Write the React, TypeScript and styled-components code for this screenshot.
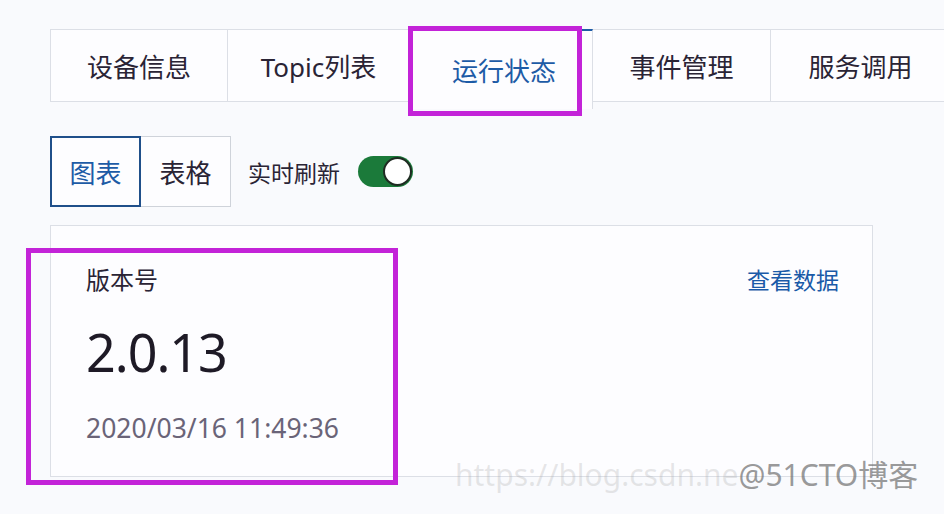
import React, { useState } from 'react';
import styled, { createGlobalStyle } from 'styled-components';

const GlobalStyle = createGlobalStyle`
  html, body {
    margin: 0;
    padding: 0;
    background: #f9fafd;
  }
  body {
    font-family: "Noto Sans", "Noto Sans CJK SC", sans-serif;
    color: #2a2435;
  }
`;

const Page = styled.div`
  position: relative;
  width: 944px;
  height: 514px;
  overflow: hidden;
  padding: 29px 0 0 50px;
  box-sizing: border-box;
`;

const TabBar = styled.div`
  display: flex;
  height: 73px;
`;

const Tab = styled.div<{ $active?: boolean; $width: number }>`
  flex: 0 0 ${(p) => p.$width}px;
  display: flex;
  align-items: center;
  justify-content: center;
  box-sizing: border-box;
  font-size: 26px;
  background: #fdfdff;
  color: ${(p) => (p.$active ? '#1d5ba6' : '#2a2435')};
  border: 1px solid #dcdfe6;
  border-left: none;
  border-top: ${(p) => (p.$active ? '2px solid #1d5ba6' : '1px solid #dcdfe6')};
  border-bottom: ${(p) => (p.$active ? 'none' : '1px solid #dcdfe6')};
  height: ${(p) => (p.$active ? '80px' : '73px')};
  padding-left: ${(p) => (p.$active ? '6px' : '0')};
  &:first-child {
    border-left: 1px solid #dcdfe6;
  }
`;

const Controls = styled.div`
  display: flex;
  align-items: center;
  margin-top: 34px;
  height: 71px;
`;

const Segment = styled.button<{ $active?: boolean; $width: number }>`
  width: ${(p) => p.$width}px;
  height: 71px;
  box-sizing: border-box;
  font-family: inherit;
  font-size: 26px;
  background: #fdfdff;
  color: ${(p) => (p.$active ? '#1d5ba6' : '#2a2435')};
  border: 1px solid ${(p) => (p.$active ? '#1f4f8a' : '#cfd3da')};
  border-width: ${(p) => (p.$active ? '2px' : '1px 1px 1px 0')};
  padding: 0;
  cursor: pointer;
`;

const AutoLabel = styled.span`
  margin-left: 17px;
  font-size: 23px;
  color: #2a2435;
`;

const Switch = styled.button<{ $on: boolean }>`
  position: relative;
  margin-left: 18px;
  width: 55px;
  height: 31px;
  border-radius: 16px;
  border: none;
  padding: 0;
  background: ${(p) => (p.$on ? '#1b7a3a' : '#c4c8cf')};
  cursor: pointer;
  &::after {
    content: '';
    position: absolute;
    top: 1px;
    left: ${(p) => (p.$on ? '25px' : '1px')};
    width: 25px;
    height: 25px;
    border-radius: 50%;
    background: #fff;
    border: 2px solid #1f2b22;
  }
`;

const Card = styled.div`
  margin-top: 18px;
  width: 823px;
  height: 252px;
  box-sizing: border-box;
  border: 1px solid #dcdfe6;
  background: #fdfdff;
  padding: 36px 33px 0 35px;
  display: flex;
  justify-content: space-between;
  align-items: flex-start;
`;

const Metric = styled.div`
  display: flex;
  flex-direction: column;
`;

const MetricTitle = styled.div`
  font-size: 24px;
  line-height: 36px;
  color: #2a2435;
`;

const MetricValue = styled.div`
  margin-top: 22px;
  font-size: 52px;
  line-height: 64px;
  color: #1e1a26;
  letter-spacing: -1px;
`;

const MetricTime = styled.div`
  margin-top: 28px;
  font-size: 26.5px;
  line-height: 32px;
  color: #6a6478;
`;

const DataLink = styled.a`
  font-size: 23px;
  line-height: 36px;
  color: #1a5aa8;
  text-decoration: none;
  cursor: pointer;
`;

const Highlight = styled.div<{ $x: number; $y: number; $w: number; $h: number }>`
  position: absolute;
  left: ${(p) => p.$x}px;
  top: ${(p) => p.$y}px;
  width: ${(p) => p.$w}px;
  height: ${(p) => p.$h}px;
  box-sizing: border-box;
  border: 5px solid #c323d8;
  pointer-events: none;
`;

const Watermark = styled.div`
  position: absolute;
  left: 455px;
  top: 455px;
  font-size: 30px;
  line-height: 40px;
  white-space: nowrap;
  pointer-events: none;
  font-family: "Noto Sans", "Noto Sans CJK SC", sans-serif;
  span:first-child {
    color: rgba(160, 160, 160, 0.25);
  }
  span:last-child {
    color: rgba(110, 110, 110, 0.7);
  }
`;

const tabs = [
  { label: '设备信息', width: 178 },
  { label: 'Topic列表', width: 182 },
  { label: '运行状态', width: 183 },
  { label: '事件管理', width: 178 },
  { label: '服务调用', width: 180 },
];

export default function App() {
  const [activeTab, setActiveTab] = useState(2);
  const [view, setView] = useState<'chart' | 'table'>('chart');
  const [live, setLive] = useState(true);

  return (
    <Page>
      <GlobalStyle />
      <TabBar>
        {tabs.map((t, i) => (
          <Tab key={t.label} $width={t.width} $active={i === activeTab} onClick={() => setActiveTab(i)}>
            {t.label}
          </Tab>
        ))}
      </TabBar>

      <Controls>
        <Segment $width={91} $active={view === 'chart'} onClick={() => setView('chart')}>
          图表
        </Segment>
        <Segment $width={90} $active={view === 'table'} onClick={() => setView('table')}>
          表格
        </Segment>
        <AutoLabel>实时刷新</AutoLabel>
        <Switch $on={live} onClick={() => setLive(!live)} />
      </Controls>

      <Card>
        <Metric>
          <MetricTitle>版本号</MetricTitle>
          <MetricValue>2.0.13</MetricValue>
          <MetricTime>2020/03/16 11:49:36</MetricTime>
        </Metric>
        <DataLink>查看数据</DataLink>
      </Card>

      <Highlight $x={408} $y={26} $w={174} $h={90} />
      <Highlight $x={26} $y={248} $w={372} $h={237} />
      <Watermark>
        <span>https://blog.csdn.ne</span>
        <span>@51CTO博客</span>
      </Watermark>
    </Page>
  );
}
